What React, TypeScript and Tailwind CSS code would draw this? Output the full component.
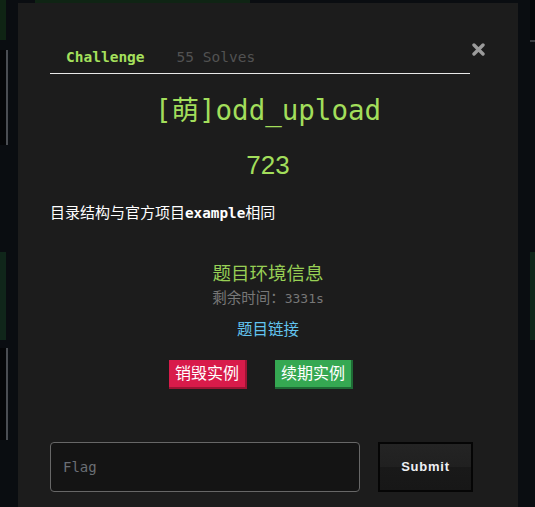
const MONO = "font-['DejaVu_Sans_Mono','Noto_Sans_CJK_SC',monospace]";
const SANS = "font-['Liberation_Sans','Noto_Sans_CJK_SC',sans-serif]";

function Backdrop() {
  // blurred page content behind the modal
  return (
    <>
      <div className="absolute left-0 top-0 h-[40px] w-[6px] bg-[#0f2414]" />
      <div className="absolute left-[35px] top-0 h-[3px] w-[215px] bg-[#0f2414]" />
      <div className="absolute left-0 top-[50px] h-[95px] w-[8px] border-r-2 border-[#4a4d52] bg-[#050608]" />
      <div className="absolute left-0 top-[252px] h-[88px] w-[6px] bg-[#10261a]" />
      <div className="absolute left-0 top-[348px] h-[92px] w-[8px] border-r-2 border-[#4a4d52] bg-[#050608]" />
      <div className="absolute right-0 top-0 h-[42px] w-[5px] border-b-2 border-[#3a3d42] bg-[#050608]" />
      <div className="absolute right-0 top-[252px] h-[88px] w-[5px] bg-[#10261a]" />
    </>
  );
}

export default function App() {
  return (
    <div className="relative h-[507px] w-[535px] overflow-hidden bg-[#0a0d11]">
      <Backdrop />

      <div className="absolute left-[18px] top-[3px] h-[520px] w-[500px] bg-[#1c1c1c] px-[32px] pt-[38px]">
        <button className="absolute left-[454px] top-[40px] h-[13px] w-[13px]">
          <svg viewBox="0 0 13 13" className="h-[13px] w-[13px]">
            <path
              d="M2 2 L11 11 M11 2 L2 11"
              stroke="#9b9b9b"
              strokeWidth="3.4"
              strokeLinecap="round"
            />
          </svg>
        </button>

        <div className={`flex w-[420px] border-b border-[#e8e8e8] ${MONO} text-[14.5px] leading-5`}>
          <span className="px-4 py-[6px] font-bold text-[#a5e05c]">Challenge</span>
          <span className="px-4 py-[6px] text-[#525252]">55 Solves</span>
        </div>

        <h2 className={`mt-[18px] text-center ${MONO} text-[27.5px] leading-[36px] text-[#a2de5b]`}>
          [萌]odd_upload
        </h2>

        <p className={`mt-[21px] text-center ${SANS} text-[26px] leading-[32px] font-medium text-[#a2de5b]`}>
          723
        </p>

        <p className={`mt-[21px] ${SANS} text-[15px] leading-[22px] text-white`}>
          目录结构与官方项目
          <strong className={`${MONO} text-[14.3px] font-bold`}>example</strong>
          相同
        </p>

        <div className="mt-[37px] flex flex-col items-center">
          <p className={`${SANS} text-[18.5px] leading-[26px] text-[#97cf55]`}>题目环境信息</p>
          <p className={`mt-[1px] ${SANS} text-[14.5px] leading-5 text-[#777777]`}>
            剩余时间：<span className={`${MONO} text-[13px]`}>3331s</span>
          </p>
          <a className={`mt-[10px] ${SANS} text-[15.5px] leading-[22px] text-[#62c4ef]`}>题目链接</a>

          <div className="mt-[19px] flex gap-[28px] pr-[14px]">
            <button
              className={`h-[29px] w-[78px] border-r-2 border-b-2 border-[#9c1434] bg-[#d81b4a] ${SANS} text-[16px] leading-[26px] text-white`}
            >
              销毁实例
            </button>
            <button
              className={`h-[29px] w-[78px] border-r-2 border-b-2 border-[#1e6a35] bg-[#35a852] ${SANS} text-[16px] leading-[26px] text-white`}
            >
              续期实例
            </button>
          </div>
        </div>

        <div className="mt-[53px] flex gap-[18px]">
          <input
            placeholder="Flag"
            className={`h-[50px] w-[310px] rounded-[4px] border border-[#676767] bg-[#141414] px-3 ${MONO} text-[14px] text-white outline-none placeholder:text-[#6b6f75]`}
          />
          <button
            className={`h-[50px] w-[95px] border-2 border-[#050505] bg-[linear-gradient(#242424_0%,#202020_50%,#191919_50%,#171717_100%)] ${SANS} text-[13px] font-bold tracking-[0.06em] text-[#eef0f4]`}
          >
            Submit
          </button>
        </div>
      </div>
    </div>
  );
}
